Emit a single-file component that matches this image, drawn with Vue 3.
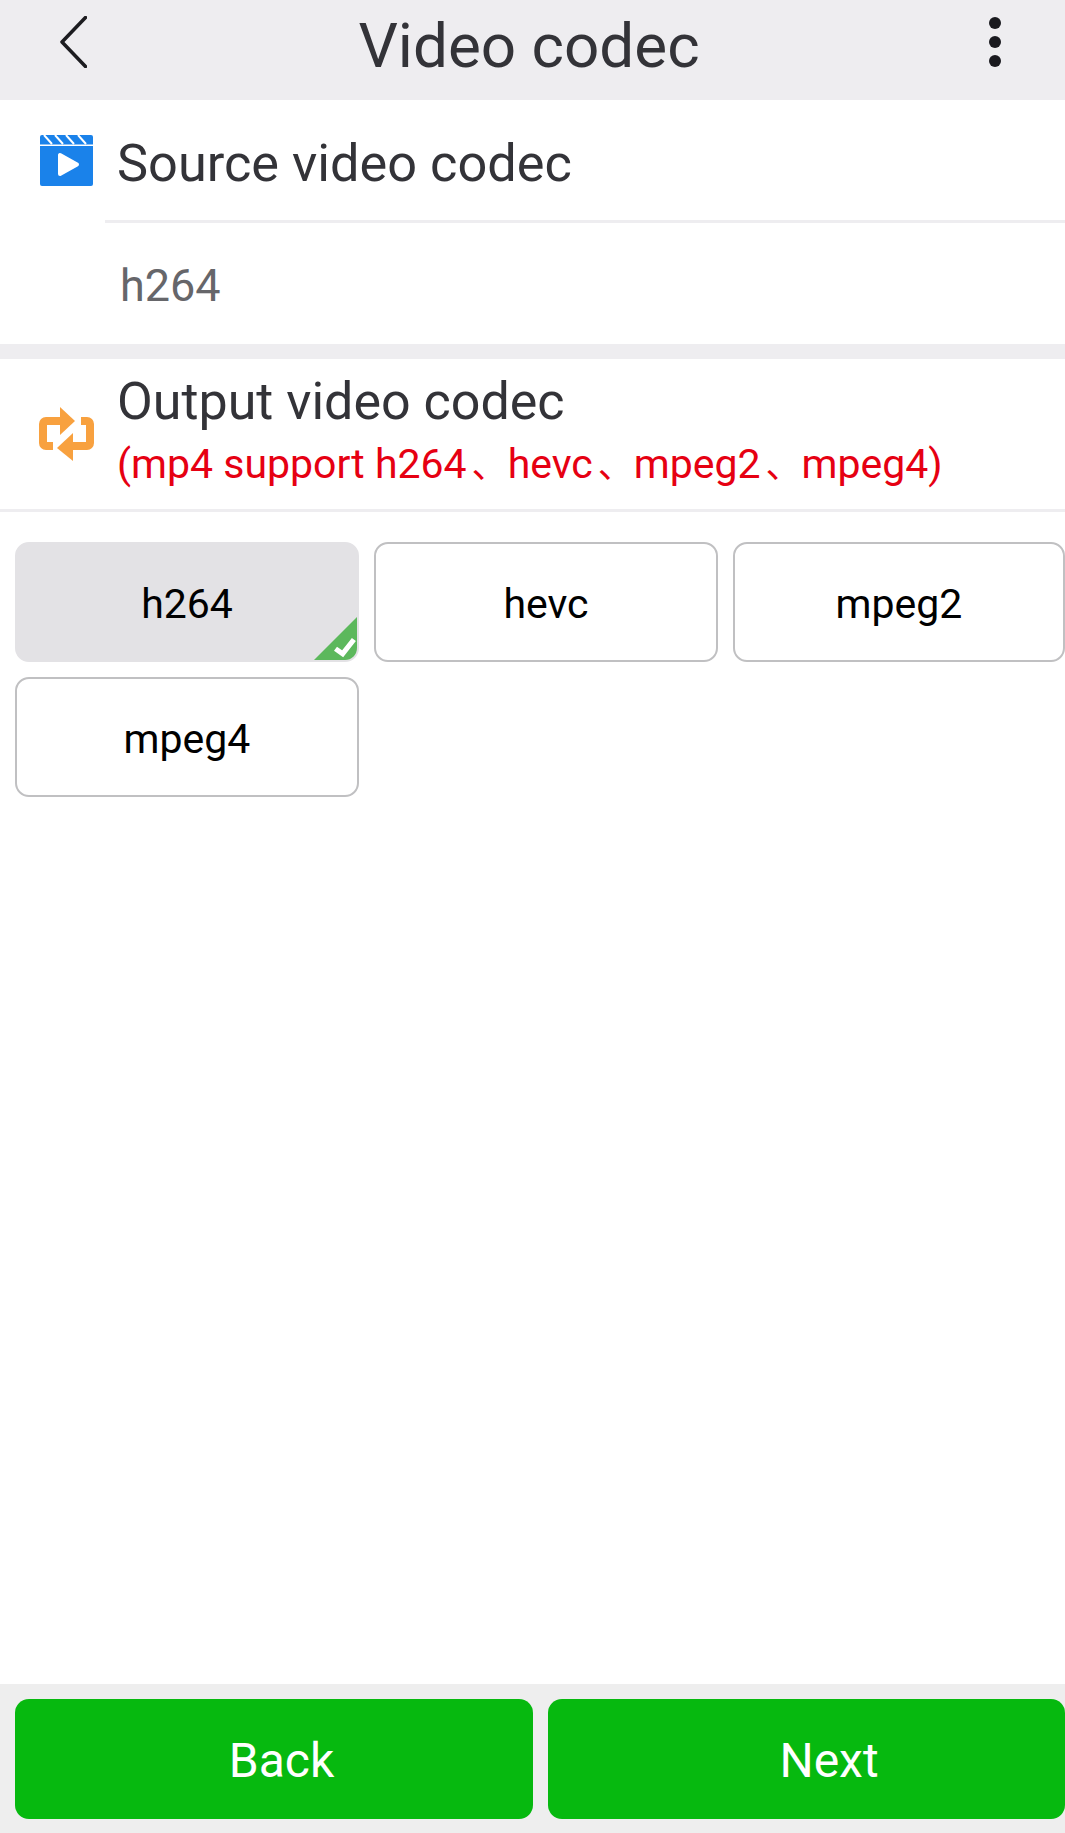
<script setup>
const options = [
  { name: 'h264', selected: true },
  { name: 'hevc', selected: false },
  { name: 'mpeg2', selected: false },
  { name: 'mpeg4', selected: false },
]
</script>

<template>
  <div class="page">
    <header class="topbar">
      <svg class="back" viewBox="0 0 27 52" width="27" height="52">
        <path d="M25.5 1.5 2 26l23.5 24.5" fill="none" stroke="#1c1c20" stroke-width="3.500" stroke-linecap="round" stroke-linejoin="round" />
      </svg>
      <div class="title">Video codec</div>
      <div class="dots"><i></i><i></i><i></i></div>
    </header>

    <section class="block">
      <div class="head">
        <svg class="film" viewBox="0 0 53 51" width="53" height="51">
          <path d="M2 0h49a2 2 0 0 1 2 2v7.500H0V2a2 2 0 0 1 2-2z" fill="#1a82ea" />
          <path d="M4 0l8 9M15 0l8 9M26 0l8 9M38 0l8 9" stroke="#fff" stroke-width="2" />
          <path d="M0 11h53v38a2 2 0 0 1-2 2H2a2 2 0 0 1-2-2z" fill="#1a82ea" />
          <path d="M20 20v19l17-9.500z" fill="#fff" stroke="#fff" stroke-width="4" stroke-linejoin="round" />
        </svg>
        <span class="label">Source video codec</span>
      </div>
      <div class="inner-line"></div>
      <div class="value">h264</div>
    </section>

    <div class="band"></div>

    <section class="block output">
      <svg class="swap" viewBox="0 0 56 54" width="56" height="54">
        <path d="M14 39H7a3 3 0 0 1-3-3V17a3 3 0 0 1 3-3h16" fill="none" stroke="#f8a13f" stroke-width="8" />
        <path d="M21 0l15 14-15 14z" fill="#f8a13f" />
        <path d="M42 14h6a3 3 0 0 1 3 3v19a3 3 0 0 1-3 3H34" fill="none" stroke="#f8a13f" stroke-width="8" />
        <path d="M34 26L18 41l16 13z" fill="#f8a13f" />
      </svg>
      <div class="output-text">
        <div class="label">Output video codec</div>
        <div class="hint">(mp4 support h264<span class="sep">、</span>hevc<span class="sep">、</span>mpeg2<span class="sep">、</span>mpeg4)</div>
      </div>
    </section>

    <main class="options">
      <div v-for="opt in options" :key="opt.name" class="option" :class="{ selected: opt.selected }">
        {{ opt.name }}
        <svg v-if="opt.selected" class="tick" viewBox="0 0 46 46" width="47" height="47">
          <path d="M46 0v46H0z" fill="#5cb85c" />
          <path d="M23 33l7 5 11-14" fill="none" stroke="#fff" stroke-width="5" />
        </svg>
      </div>
    </main>

    <footer class="actions">
      <button class="action back-btn">Back</button>
      <button class="action next-btn">Next</button>
    </footer>
  </div>
</template>

<style scoped>
.page {
  height: 1833px;
  display: flex;
  flex-direction: column;
  background: #fff;
  font-family: Roboto, "Noto Sans CJK SC", sans-serif;
  overflow: hidden;
}
.topbar {
  height: 100px;
  display: flex;
  align-items: center;
  padding-left: 60px;
  padding-right: 64px;
  background: #eeedf0;
  flex-shrink: 0;
}
.back {
  margin-top: -16px;
}
.title {
  flex: 1;
  padding-right: 18px;
  text-align: center;
  font-size: 62px;
  color: #333338;
  margin-top: -10px;
}
.dots {
  display: flex;
  flex-direction: column;
  gap: 7px;
  margin-top: -16px;
}
.dots i {
  display: block;
  width: 12px;
  height: 12px;
  border-radius: 50%;
  background: #1a1a1f;
}
.head {
  height: 120px;
  display: flex;
  align-items: center;
  gap: 24px;
  padding-left: 40px;
}
.head .label {
  padding-top: 6px;
  font-size: 52.3px;
}
.label {
  font-size: 52px;
  color: #333338;
}
.inner-line {
  height: 3px;
  margin-left: 105px;
  background: #eeedf0;
}
.value {
  height: 121px;
  padding-left: 120px;
  padding-top: 4px;
  box-sizing: border-box;
  display: flex;
  align-items: center;
  font-size: 45px;
  color: #66666a;
}
.band {
  height: 15px;
  background: #eeedf0;
}
.output {
  height: 150px;
  display: flex;
  align-items: center;
  gap: 22px;
  padding-left: 39px;
  border-bottom: 3px solid #eeedf0;
}
.output-text {
  padding-top: 4px;
}
.output-text .label {
  line-height: 58px;
}
.hint {
  font-size: 41px;
  line-height: 66px;
  color: #e60012;
}
.sep {
  font-size: 36px;
  padding-left: 5px;
}
.options {
  flex: 1;
  display: grid;
  grid-template-columns: 344px 344px 332px;
  grid-auto-rows: 120px;
  align-content: start;
  gap: 15px;
  padding: 30px 0 0 15px;
}
.option {
  position: relative;
  display: flex;
  align-items: center;
  justify-content: center;
  box-sizing: border-box;
  border: 2px solid #c0c0c2;
  border-radius: 14px;
  padding-top: 4px;
  font-size: 41px;
  color: #000;
  overflow: hidden;
}
.option.selected {
  border-color: #e3e2e5;
  background: #e3e2e5;
}
.tick {
  position: absolute;
  right: -2px;
  bottom: -2px;
}
.actions {
  display: flex;
  gap: 15px;
  padding: 15px 0 14px 15px;
  background: #eeeeee;
  flex-shrink: 0;
}
.action {
  flex: none;
  height: 120px;
  box-sizing: border-box;
  border: none;
  border-radius: 14px;
  background: #06b90f;
  color: #fff;
  font-family: inherit;
  font-size: 48px;
  padding-top: 3px;
}
.back-btn {
  width: 518px;
  padding-left: 21px;
}
.next-btn {
  width: 517px;
  padding-left: 51px;
}
</style>
